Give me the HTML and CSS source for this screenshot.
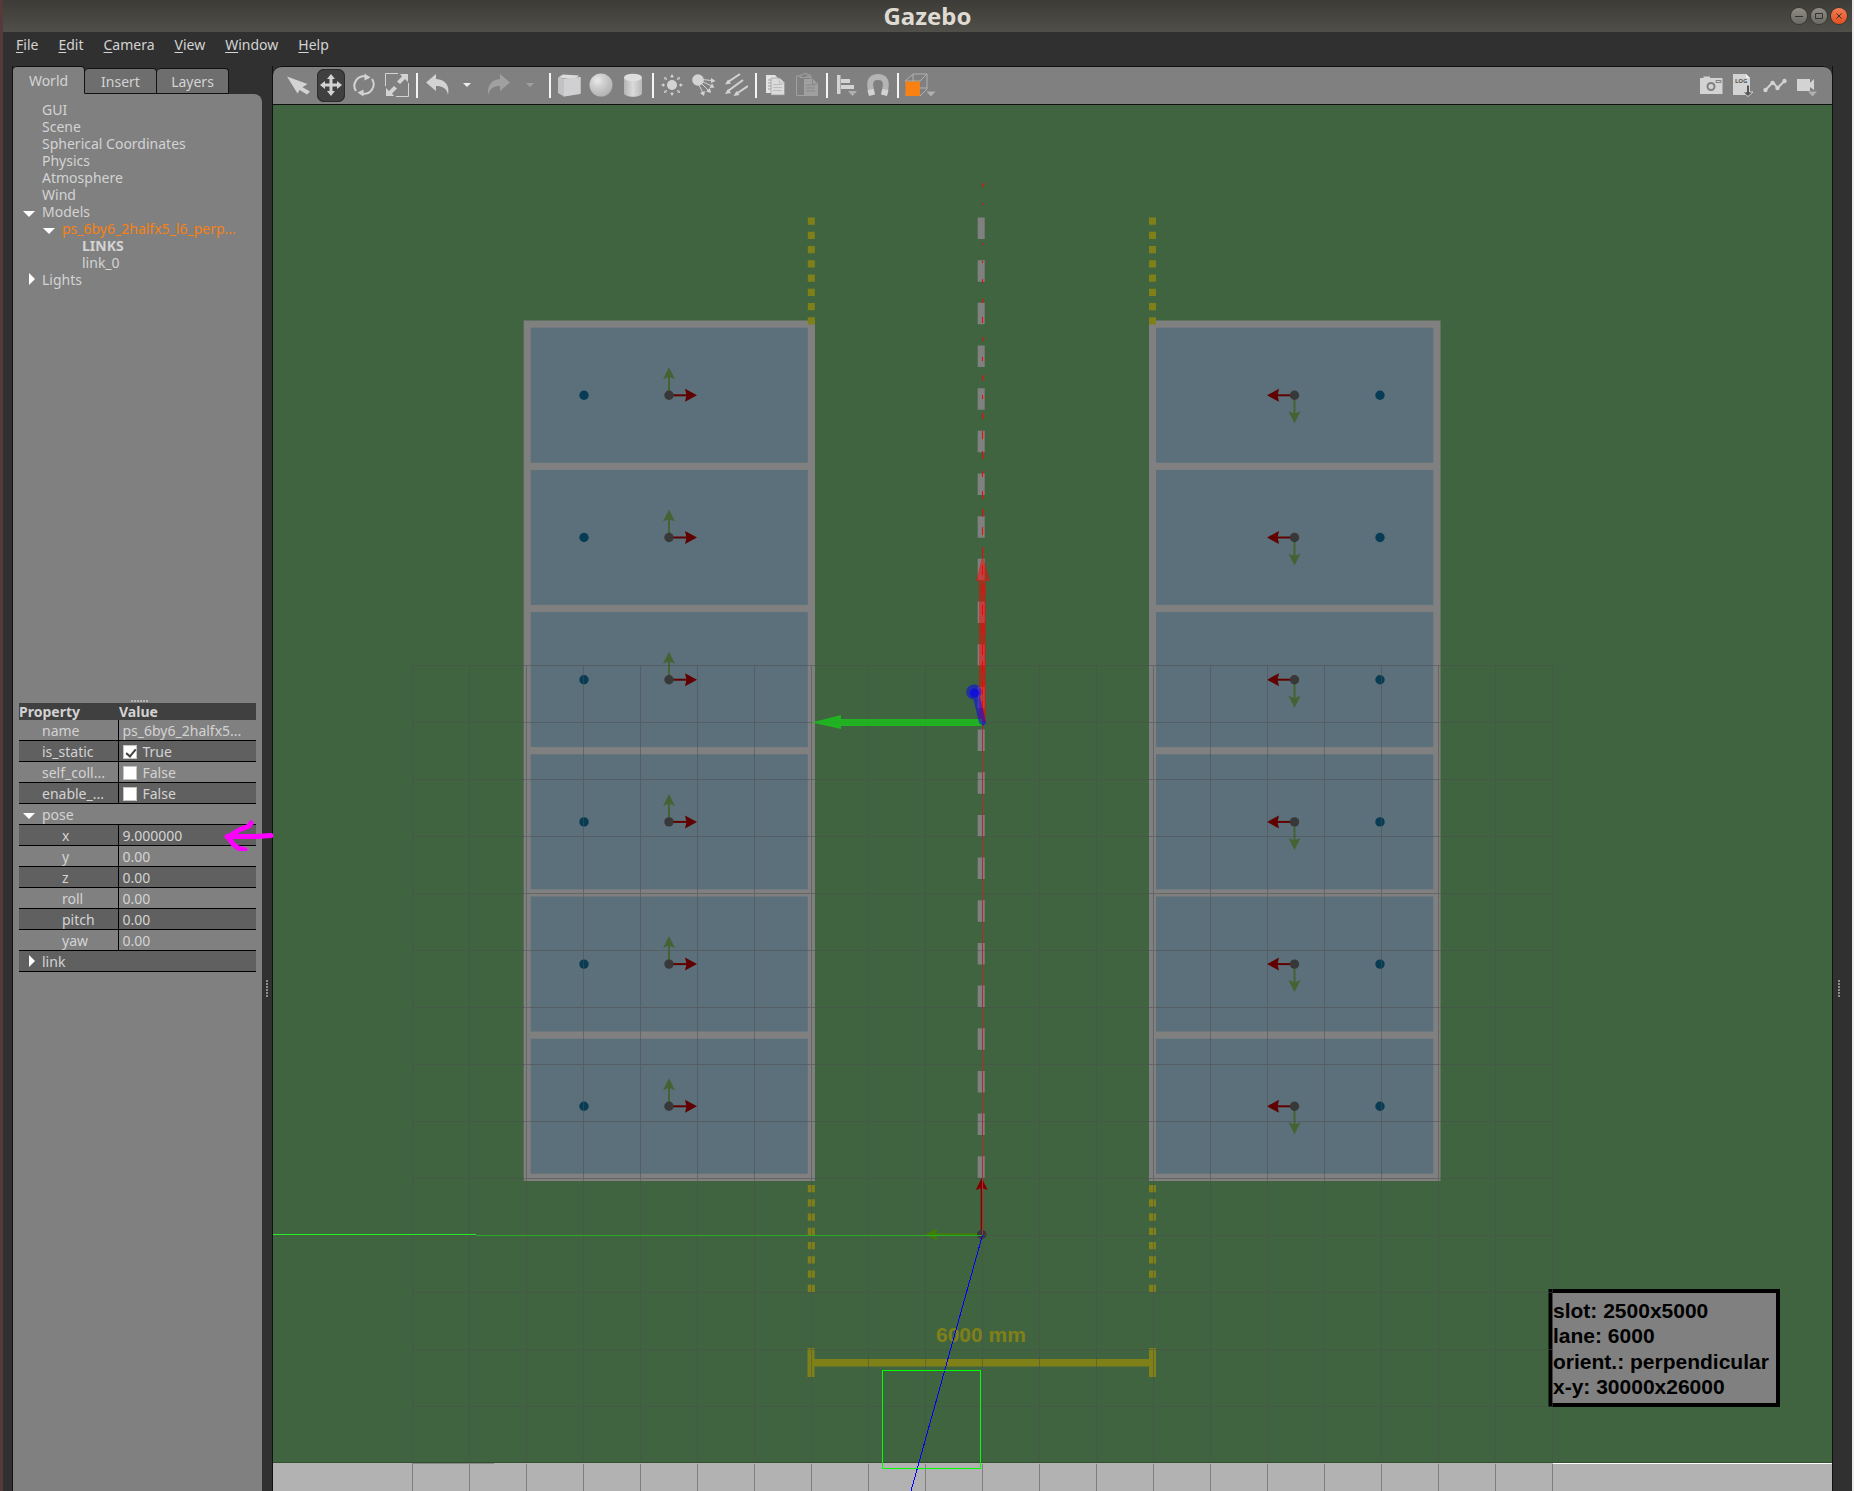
FILE: index.html
```html
<!DOCTYPE html>
<html lang="en">
<head>
<meta charset="utf-8">
<title>Gazebo</title>
<link rel="stylesheet" href="styles.css">
</head>
<body>
<div class="window">
  <header class="titlebar">
    <h1>Gazebo</h1>
    <div class="controls">
      <button aria-label="Minimize"><svg viewBox="0 0 16 16"><path d="M4 8.500h8"/></svg></button>
      <button aria-label="Maximize"><svg viewBox="0 0 16 16"><path d="M4.500 5.500h7v5h-7z"/></svg></button>
      <button class="close" aria-label="Close"><svg viewBox="0 0 16 16"><path d="M5.500 5.500l5 5M10.500 5.500l-5 5"/></svg></button>
    </div>
  </header>

  <nav class="menubar">
    <button><u>F</u>ile</button>
    <button><u>E</u>dit</button>
    <button><u>C</u>amera</button>
    <button><u>V</u>iew</button>
    <button><u>W</u>indow</button>
    <button><u>H</u>elp</button>
  </nav>

  <div class="workspace">
    <aside class="sidebar">
      <div class="tabs">
        <button class="tab active">World</button>
        <button class="tab">Insert</button>
        <button class="tab">Layers</button>
      </div>
      <div class="panel">
        <ul class="tree">
          <li>GUI</li>
          <li>Scene</li>
          <li>Spherical Coordinates</li>
          <li>Physics</li>
          <li>Atmosphere</li>
          <li>Wind</li>
          <li class="open">Models
            <ul>
              <li class="open"><span class="selected">ps_6by6_2halfx5_l6_perp...</span>
                <ul>
                  <li class="heading">LINKS</li>
                  <li>link_0</li>
                </ul>
              </li>
            </ul>
          </li>
          <li class="shut">Lights</li>
        </ul>
        <div class="properties">
          <span class="grip grip-h"></span>
          <table>
            <thead>
              <tr><th>Property</th><th>Value</th></tr>
            </thead>
            <tbody>
              <tr><td>name</td><td>ps_6by6_2halfx5...</td></tr>
              <tr><td><label for="static">is_static</label></td><td><input type="checkbox" id="static" checked>True</td></tr>
              <tr><td><label for="collide">self_coll...</label></td><td><input type="checkbox" id="collide">False</td></tr>
              <tr><td><label for="enable">enable_...</label></td><td><input type="checkbox" id="enable">False</td></tr>
              <tr><td class="open" colspan="2">pose</td></tr>
              <tr class="child"><td>x</td><td class="marked">9.000000
                <svg class="pointer" viewBox="0 0 50 32"><path d="M47 16.500L32 17.500H3M27 4L25 7L15 11L4 18L9 25L14 29L21 31"/></svg></td></tr>
              <tr class="child"><td>y</td><td>0.00</td></tr>
              <tr class="child"><td>z</td><td>0.00</td></tr>
              <tr class="child"><td>roll</td><td>0.00</td></tr>
              <tr class="child"><td>pitch</td><td>0.00</td></tr>
              <tr class="child"><td>yaw</td><td>0.00</td></tr>
              <tr><td class="shut" colspan="2">link</td></tr>
            </tbody>
          </table>
        </div>
      </div>
    </aside>

    <div class="gutter"><span class="grip"></span></div>

    <main class="viewer">
      <div class="toolbar">
        <div class="group manipulate">
          <button aria-label="Select"><svg viewBox="0 0 24 24"><path d="M1 3.500L21.500 11L16.500 14.300L24 18.500L21 21.500L13.700 17L11.500 20.500z"/></svg></button>
          <button class="pressed" aria-label="Translate"><svg viewBox="0 0 24 24"><path d="M12 1l4 5h-2.500v4.500H18V8l5 4-5 4v-2.500h-4.500V18H16l-4 5-4-5h2.500v-4.500H6V16l-5-4 5-4v2.500h4.500V6H8z"/></svg></button>
          <button aria-label="Rotate"><svg viewBox="0 0 24 24"><g class="line w2"><path d="M4 18A9.500 9.500 0 0 1 14 3.500M20 6A9.500 9.500 0 0 1 10 20.500"/></g><path d="M12.500 .5l6 4-6 3zM11.500 23.500l-6-4 6-3z"/></svg></button>
          <button aria-label="Scale"><svg viewBox="0 0 24 24"><path class="line w1" d="M.500 13V.500H13M23.500 10V23.500H11"/><path d="M15 1h8v8l-3-3-5 5-3-2.500 5-5zM9 23H1v-8l3 3 5-5 3 2.500-5 5z"/></svg></button>
        </div>
        <span class="sep"></span>
        <div class="group history">
          <button aria-label="Undo"><svg viewBox="0 0 24 24"><path d="M0 9.500L10 1v5c9 .5 14 6 12 16C21 15 16 13 10 13v5z"/></svg></button>
          <button class="drop" aria-label="Undo history"><svg viewBox="0 0 24 24"><path d="M7 10h8l-4 4z" fill="#eee"/></svg></button>
          <button class="dim" aria-label="Redo"><svg viewBox="0 0 24 24"><path d="M24 9.500L14 1v5C6 6.500 1 12 2 22c2-7 6-9 12-9v5z"/></svg></button>
          <button class="drop dim" aria-label="Redo history"><svg viewBox="0 0 24 24"><path d="M10 10h8l-4 4z"/></svg></button>
        </div>
        <span class="sep"></span>
        <button aria-label="Box"><svg viewBox="0 0 24 24"><path fill="#dcdcdc" d="M1 4.500L6 1.500L22 2.500L18 6z"/><path fill="#c8c8ca" d="M18 6L23.500 4V20L6 23.500z"/><path fill="#c2c2c2" d="M1 4.500L7 5.500V23.500L1 20z"/><path fill="#d0d0d2" d="M7 5.500L23.500 4V21L7 23.500z"/></svg></button>
        <button aria-label="Sphere"><svg viewBox="0 0 24 24"><defs><radialGradient id="ball" cx=".35" cy=".3" r=".7"><stop offset="0" stop-color="#eaeaea"/><stop offset=".4" stop-color="#d0d0d0"/><stop offset="1" stop-color="#b4b4b4"/></radialGradient></defs><circle cx="12" cy="12" r="11.500" fill="url(#ball)"/></svg></button>
        <button aria-label="Cylinder"><svg viewBox="0 0 24 24"><defs><linearGradient id="tube"><stop offset="0" stop-color="#b4b4b4"/><stop offset=".5" stop-color="#dadada"/><stop offset="1" stop-color="#b8b8b8"/></linearGradient></defs><path fill="url(#tube)" d="M3 4v16c0 5 18 5 18 0V4z"/><ellipse cx="12" cy="4.500" rx="9" ry="3.800" fill="#dedede"/></svg></button>
        <span class="sep"></span>
        <button aria-label="Point light"><svg viewBox="0 0 24 24"><circle cx="12" cy="12" r="5"/><g class="line w1"><path d="M12 5V3M12 19v2M5 12H3M19 12h2M7 7L5.500 5.500M17 7l1.500-1.500M7 17l-1.500 1.500M17 17l1.500 1.500"/></g><path d="M12 1l1.800 3h-3.600zM12 23l1.800-3h-3.600zM1 12l3-1.800v3.600zM23 12l-3-1.800v3.600zM4 4l3 .8L4.800 7zM20 4l-3 .8L19.200 7zM4 20l3-.8L4.800 17zM20 20l-3-.8 2.200-2.200z"/></svg></button>
        <button aria-label="Spot light"><svg viewBox="0 0 24 24"><circle cx="6" cy="7" r="5.800"/><g class="line w1"><path d="M10 6.500l10 1M11 9l9 4M10 11l7 7M7 12l4 8"/></g><path d="M19 5l4.500 3-4.500 2zM20 10.500l2.500 4-5 .5zM18 15l1 5-5-1.500zM13 18l-1 5-4-3z"/></svg></button>
        <button aria-label="Directional light"><svg viewBox="0 0 24 24"><g class="line w2"><path d="M16 1L4 9M19 7L4 18M24 13L12 21"/></g><path d="M1 11.500l3-5 3 4zM1 21l3-5 3 4zM9.500 23l3-5 3 4z"/></svg></button>
        <span class="sep"></span>
        <button aria-label="Copy"><svg viewBox="0 0 24 24"><path fill="#e4e4e4" d="M3 2h9l4 4v14H3z"/><path class="dark" d="M5 7h6M5 10h5M5 13h5M5 16h5"/><path fill="#dadada" stroke="#9a9a9a" stroke-width=".7" d="M8 5h9l4.500 4.500V22H8z"/><path class="faint" d="M10 11.500h9M10 14.500h9M10 17.500h9M16.500 5v5H21"/></svg></button>
        <button class="dim" aria-label="Paste"><svg viewBox="0 0 24 24"><path class="line w1" d="M6 3H1.500V22.500H9M11 3h5v4M5 4.500V2h3l1-1.500h3L13 2h2v2.500z"/><path d="M9 6h9l5 5v12H9z"/><path class="dark" d="M11 12h9M11 15h9M11 18h9M17.500 6v5H22"/></svg></button>
        <span class="sep"></span>
        <button aria-label="Align"><svg viewBox="0 0 24 24"><path d="M3 2h3.500v19H3zM7 6h9v4H7zM7 12h13v4H7z"/><path fill="#b0b0b0" d="M14 18h9l-4.500 5z"/></svg></button>
        <button aria-label="Snap"><svg viewBox="0 0 24 24"><path fill="none" stroke="#b4b4b4" stroke-width="6" d="M6 21L4.500 15C3 7 6.500 4 12 4s9 3 7.500 11L18 21"/><path d="M1.500 17l6-1 1.500 5.500-6 1.500zM22.500 17l-6-1-1.500 5.500 6 1.500z"/></svg></button>
        <span class="sep"></span>
        <button class="wide" aria-label="View angle"><svg viewBox="0 0 32 24"><path class="line w1" d="M1 8L9 1H23V16L16 23M9 1V15L1 22M9 15H23M16 8L23 1M1 8H16"/><path fill="#f98012" d="M1.500 8.500h14.500v14.500H1.500z"/><path fill="#b0b0b0" d="M22.500 18.500h9l-4.500 5z"/></svg></button>
        <div class="group output">
          <button aria-label="Screenshot"><svg viewBox="0 0 24 24"><path d="M1 5h3.500V3.500H11V5h12.500v16H1z"/><circle class="mid" cx="12" cy="13.500" r="3.500"/><path class="mid" d="M17 7.500h5v2h-5z"/></svg></button>
          <button aria-label="Log"><svg viewBox="0 0 24 24"><path d="M2 1h13l4 4v17H2z"/><path fill="#eee" d="M15 1v4h4z"/><text x="4" y="10">LOG</text><path class="down" d="M15.500 12h3v7h3.500l-5 4.500-5-4.500h3.500z"/></svg></button>
          <button aria-label="Plot"><svg viewBox="0 0 24 24"><path class="line w2" d="M2.500 17L10 9l4.500 6L21.500 8"/><circle cx="2.500" cy="17" r="2.200"/><circle cx="9.500" cy="10" r="2.200"/><circle cx="14.500" cy="15" r="2.200"/><circle cx="21.500" cy="8" r="2.200"/></svg></button>
          <button aria-label="Record video"><svg viewBox="0 0 24 24"><path d="M2 6h13v12H2zM15 10l4-4v11l-4-3z"/><path fill="#b0b0b0" d="M13 18.500h9l-4.500 5z"/></svg></button>
        </div>
      </div>
      <svg class="scene" viewBox="273 105 1559 1386" preserveAspectRatio="xMidYMid slice" role="img" aria-label="Parking lot seen from above">
        <defs>
          <g id="slot-left">
            <rect class="slot" x="530.700" y="-67.600" width="277.100" height="135"/>
            <circle class="target" cx="584" r="4.700"/>
            <path class="axis-y" d="M669 0V-20"/>
            <path class="tip-y" d="M669-28l6 12-6-2.500-6 2.500z"/>
            <path class="axis-x" d="M669 0h20"/>
            <path class="tip-x" d="M697 0l-12 6.500 1.500-6.500-1.500-6.500z"/>
            <circle class="hub" cx="669" r="4.700"/>
          </g>
          <g id="slot-right">
            <rect class="slot" x="1156" y="-67.600" width="277.300" height="135"/>
            <circle class="target" cx="1380" r="4.700"/>
            <path class="axis-y" d="M1294.500 0v20"/>
            <path class="tip-y" d="M1294.500 28l6-12-6 2.500-6-2.500z"/>
            <path class="axis-x" d="M1294.500 0h-20"/>
            <path class="tip-x" d="M1267 0l12 6.500-1.500-6.500 1.500-6.500z"/>
            <circle class="hub" cx="1294.500" r="4.700"/>
          </g>
          <pattern id="cells" x="412" y="665" width="57" height="57" patternUnits="userSpaceOnUse">
            <path fill="#4c4c4c" d="M0 0h57v1H1v56H0z"/>
          </pattern>
        </defs>
        <path fill="#b2b2b2" d="M273 1460h1559v31H273z"/>
        <path fill="#406440" d="M273 105h1559v1357H273z"/>
        <path fill="#31502f" d="M273 1462h1559v1H273z"/>

        <path fill="#808080" d="M523.700 320.500h291.300v860.500H523.700zM1149 320.500h291.500v860.500H1149z"/>
        <use href="#slot-left" y="395.300"/><use href="#slot-right" y="395.300"/>
        <use href="#slot-left" y="537.500"/><use href="#slot-right" y="537.500"/>
        <use href="#slot-left" y="679.700"/><use href="#slot-right" y="679.700"/>
        <use href="#slot-left" y="821.900"/><use href="#slot-right" y="821.900"/>
        <use href="#slot-left" y="964.100"/><use href="#slot-right" y="964.100"/>
        <use href="#slot-left" y="1106.300"/><use href="#slot-right" y="1106.300"/>

        <path class="edge" stroke-dasharray="7.200 7.040" d="M811.300 217.500V325M1152.500 217.500V325M811.300 1185V1293M1152.500 1185V1293"/>
        <path class="lane" stroke-dasharray="21.500 21.170" d="M981.200 217.500V1179"/>
        <path fill="#808018" d="M807.500 1348h7v11h334.500v-11h7v29h-7v-10.500H814.500V1377h-7z"/>
        <text class="measure" x="936" y="1342">6000 mm</text>

        <path fill="none" stroke="#800000" stroke-width="2" d="M981.700 1234V1186"/>
        <path fill="#800000" d="M981.700 1178l6 12-6-2-6 2z"/>
        <path fill="none" stroke="#408000" stroke-width="2" d="M981 1234.500H934"/>
        <path fill="#408000" d="M925.500 1234.500l12-6-2 6 2 6z"/>
        <circle class="hub" cx="981.700" cy="1234.500" r="4.700"/>

        <rect x="1550.500" y="1291" width="227.500" height="114" fill="#808080" stroke="#000" stroke-width="4"/>
        <g class="legend">
          <text x="1553" y="1318">slot: 2500x5000</text>
          <text x="1553" y="1343">lane: 6000</text>
          <text x="1553" y="1369">orient.: perpendicular</text>
          <text x="1553" y="1394">x-y: 30000x26000</text>
        </g>

        <path fill="url(#cells)" opacity=".5" d="M412 665h1141v798H412z"/>
        <path fill="url(#cells)" opacity=".5" d="M412 1464h1141v27H412z"/>
        <path fill="#888" d="M412 1463h82v1h-82z"/>
        <path fill="#fff" d="M1553 1463h279v1h-279z"/>

        <path fill="#22ee22" d="M273 1234h203v1H273z"/>
        <path fill="#2aa82a" d="M476 1235h507v1H476z"/>
        <path fill="#b42a2a" d="M982 724h1v511h-1z"/>
        <path class="ray" d="M982.500 183v4M982.500 203v2M982.500 243v2M982.500 261v2M982.500 279v4M982.500 299v4M982.500 317v6M982.500 337v4M982.500 357v4M982.500 375v6M982.500 395v4M982.500 413v6M982.500 431v8M982.500 451v8M982.500 471v6M982.500 491v8M982.500 509v8M982.500 527v8M982.500 547v10M982.500 565v10M982.500 585v10M982.500 605v10M982.500 623v12M982.500 643v12M982.500 661v13M982.500 681v13M982.500 701v14"/>
        <path fill="#f00" fill-opacity=".5" d="M982.500 555l7.500 26h-4v141h-7V581h-3z"/>
        <path fill="#0f0" fill-opacity=".5" d="M811.500 722.500L841 715v4h141v7H841v3z"/>
        <path fill="#0000ff" fill-opacity=".5" d="M974 684.500a7.500 7.500 0 0 1 6 12L986 723l-3 3-4-3-5.500-23.500a7.500 7.500 0 0 1 .5-15z"/>
        <circle cx="974.500" cy="693" r="4.500" fill="#1010d8"/>
        <path fill="none" stroke="#00f" shape-rendering="crispEdges" d="M982.500 1235L911 1491"/>
        <path fill="none" stroke="#0f0" d="M882.500 1370.500h98v98h-98z"/>
      </svg>
    </main>

    <div class="gutter right"><span class="grip"></span></div>
  </div>
</div>
</body>
</html>
```
FILE: styles.css
```css
* { box-sizing: border-box; }

body {
  margin: 0;
  background: #303030;
  color: #d3d3d3;
  font: 14px/17px "Noto Sans", "Open Sans", sans-serif;
}

button {
  padding: 0;
  border: 0;
  background: none;
  color: inherit;
  font: inherit;
}

.window {
  display: flex;
  flex-direction: column;
  height: 100vh;
  border-left: 3px solid #543a38;
  border-right: 2px solid #ececec;
}

/* Title bar */
.titlebar {
  display: grid;
  grid-template-columns: 1fr auto 1fr;
  align-items: center;
  height: 32px;
  padding: 0 5px;
  background: linear-gradient(#3c3b37, #504f48);
}

.titlebar h1 {
  grid-column: 2;
  margin: 0;
  color: #dfdbd2;
  font-size: 24px;
  line-height: 32px;
}

.controls {
  display: flex;
  justify-content: flex-end;
  gap: 4px;
}

.controls button {
  width: 16px;
  height: 16px;
  border-radius: 50%;
  background: linear-gradient(#8f8d84, #6b6a63);
  box-shadow: 0 0 0 1px #3a3934;
}

.controls .close { background: linear-gradient(#f47b54, #e2501f); }

.controls svg {
  display: block;
  fill: none;
  stroke: #35342f;
}

/* Menu bar */
.menubar {
  display: flex;
  gap: 20px;
  height: 34px;
  padding: 3px 13px 13px;
}

.menubar u { text-underline-offset: 2px; }

.workspace {
  display: flex;
  flex: 1;
  min-height: 0;
}

/* Sidebar */
.sidebar {
  display: flex;
  flex-direction: column;
  width: 250px;
  margin-left: 9px;
}

.tabs {
  display: flex;
  align-items: flex-end;
  height: 28px;
  border-left: 1px solid #111;
}

.tab {
  width: 72px;
  height: 26px;
  border: 1px solid #111;
  border-left: 0;
  border-radius: 4px 4px 0 0;
  background: #6e6e6e;
}

.tab.active {
  height: 28px;
  border-bottom-color: #808080;
  background: #808080;
}

.panel {
  display: grid;
  flex: 1;
  grid-template-rows: minmax(0, 17fr) minmax(0, 22fr);
  min-height: 0;
  border-left: 1px solid #111;
  border-radius: 0 8px 0 0;
  background: #808080;
}

.tree,
.tree ul {
  margin: 0;
  padding: 0 0 0 20px;
  list-style: none;
}

.tree { padding: 7px 0 0 29px; }

.tree li { white-space: nowrap; }

.heading { font-weight: bold; }

.selected { color: #f98012; }

.open,
.shut { position: relative; }

.open::before,
.shut::before {
  position: absolute;
  top: 8px;
  left: -19px;
  border: 6px solid transparent;
  border-top-color: #fff;
  border-bottom: 0;
  content: "";
}

.shut::before {
  top: 2px;
  left: -13px;
  border: 6px solid transparent;
  border-right: 0;
  border-left-color: #fff;
}

.grip {
  width: 2px;
  height: 17px;
  background: repeating-linear-gradient(#8c8c8c 0 2px, transparent 2px 3px);
}

.grip-h {
  position: absolute;
  top: -3px;
  left: 118px;
  width: 17px;
  height: 2px;
  background: repeating-linear-gradient(90deg, #b4b4b4 0 2px, transparent 2px 3px);
}

.properties {
  position: relative;
  padding: 0 6px;
}

table {
  width: 100%;
  border-collapse: collapse;
  table-layout: fixed;
}

th {
  height: 17px;
  padding: 0 0 0 1px;
  background: #404040;
  text-align: left;
}

th:first-child {
  width: 99px;
  padding: 0;
}

td {
  height: 21px;
  padding: 0 0 0 4px;
  border-bottom: 1px solid #000;
  white-space: nowrap;
}

td:first-child { padding-left: 23px; }

td:first-child:not([colspan]) { border-right: 1px solid #000; }

.child td:first-child { padding-left: 43px; }

tbody tr:nth-child(even) { background: #606060; }

td.open::before { top: 9px; left: 4px; }

td.shut::before { top: 4px; left: 10px; }

input {
  position: relative;
  width: 14px;
  height: 14px;
  margin: 0 6px 0 0;
  border: 1px solid #c8c4be;
  background: #fff;
  appearance: none;
  vertical-align: -2px;
}

input:checked::after {
  position: absolute;
  top: 1px;
  left: 4px;
  width: 4px;
  height: 8px;
  border: solid #444;
  border-width: 0 2px 2px 0;
  content: "";
  transform: rotate(40deg);
}

.marked { position: relative; }

.pointer {
  position: absolute;
  z-index: 1;
  top: -6px;
  left: 105px;
  width: 50px;
  height: 32px;
  fill: none;
  stroke: #f0f;
  stroke-linecap: round;
  stroke-linejoin: round;
  stroke-width: 5px;
}

/* Splitter columns beside the viewer */
.gutter {
  display: flex;
  align-items: center;
  justify-content: center;
  width: 11px;
  padding-top: 419px;
  border-right: 1px solid #111;
}

.gutter.right {
  width: 20px;
  padding-right: 8px;
  border-right: 0;
  border-left: 1px solid #111;
}

/* Viewer */
.viewer {
  display: flex;
  flex: 1;
  flex-direction: column;
  min-width: 0;
}

.toolbar {
  display: flex;
  gap: 4px;
  align-items: center;
  height: 39px;
  padding: 0 11px 1px;
  border-top: 1px solid #111;
  border-bottom: 1px solid #111;
  border-radius: 9px 9px 0 0;
  background: #808080;
}

.group {
  display: flex;
  gap: 4px;
}

.manipulate { gap: 5px; }

.history { padding: 0 4px 0 2px; }

.output { margin-left: auto; }

.toolbar button {
  display: flex;
  align-items: center;
  justify-content: center;
  width: 28px;
  height: 33px;
}

.toolbar .drop { width: 24px; }

.toolbar .wide { width: 34px; }

.toolbar .pressed {
  border-radius: 7px;
  background: #404040;
  box-shadow: 0 0 0 1px #2c2c2c inset;
}

.toolbar svg {
  width: 24px;
  height: 24px;
  fill: #d3d3d3;
}

.toolbar .wide svg { width: 32px; }

.toolbar .dim svg { fill: #a0a0a0; }

.sep {
  width: 2px;
  height: 25px;
  margin-left: 1px;
  background: #f4f4f0;
}

.line {
  fill: none;
  stroke: #d3d3d3;
}

.dim .line { stroke: #a0a0a0; }

.wide .line { stroke: #b0b0b0; }

.w1 { stroke-width: 1px; }

.w2 { stroke-width: 2px; }

.dark,
.faint {
  fill: none;
  stroke: #a0a0a0;
}

.faint { stroke: #bcbcbc; }

.dim .dark { stroke: #888; }

.mid {
  fill: none;
  stroke: #808080;
  stroke-width: 2px;
}

path.mid { stroke-width: 1px; }

.toolbar text {
  fill: #555;
  font-size: 6px;
  font-weight: bold;
}

.down {
  fill: #555;
  stroke: #d3d3d3;
}

/* Simulated world */
.scene {
  display: block;
  flex: 1;
  width: 100%;
  min-height: 0;
}

.slot { fill: #5b707b; }

.target { fill: #083c54; }

.hub { fill: #383838; }

.axis-x,
.axis-y,
.edge,
.lane,
.ray { fill: none; }

.axis-x {
  stroke: #600000;
  stroke-width: 2px;
}

.axis-y {
  stroke: #446232;
  stroke-width: 2px;
}

.tip-x { fill: #600000; }

.tip-y { fill: #446232; }

.edge {
  stroke: #808018;
  stroke-width: 7px;
}

.lane {
  stroke: #808080;
  stroke-width: 7px;
}

.ray { stroke: #f00; }

.measure,
.legend {
  font: bold 21px "Liberation Sans", Arial, sans-serif;
}

.measure { fill: #808018; }
```
